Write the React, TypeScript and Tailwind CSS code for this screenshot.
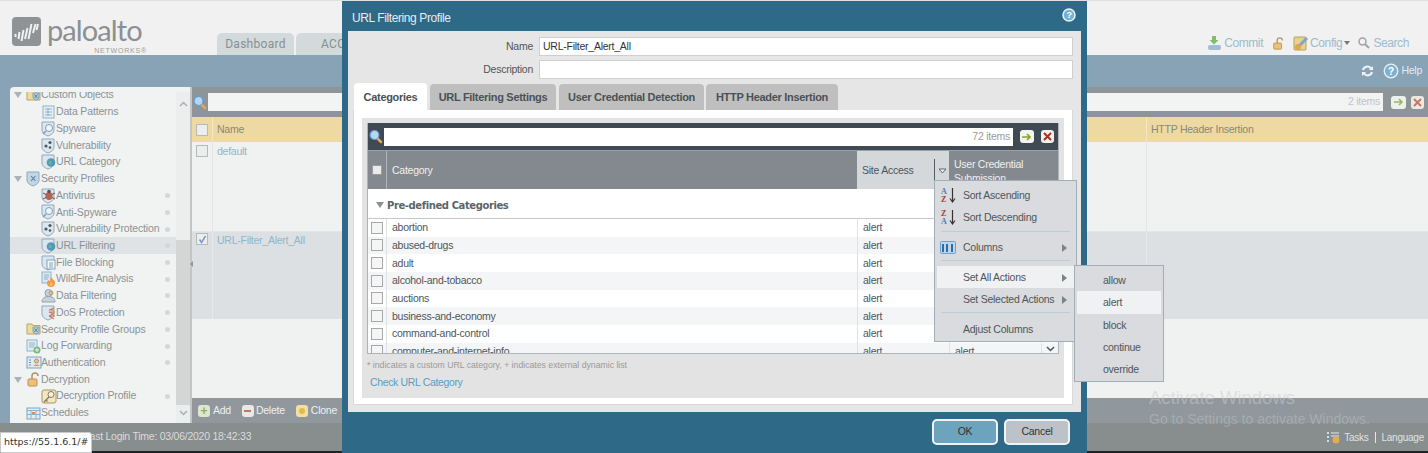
import React from "react";

const FONT = "font-['Liberation_Sans',Arial,sans-serif]";

function Shield({ fill = "#b9cfe0", children }: { fill?: string; children?: React.ReactNode }) {
  return (
    <svg width="15" height="16" viewBox="0 0 15 16" className="shrink-0">
      <path d="M1 1h12v8c0 3-3 5-6 6-3-1-6-3-6-6z" fill={fill} stroke="#8fa9bd" strokeWidth="1" />
      {children}
    </svg>
  );
}

function TreeIcon({ kind }: { kind: string }) {
  switch (kind) {
    case "table":
      return (
        <svg width="13" height="14" viewBox="0 0 13 14" className="shrink-0">
          <rect x="1" y="1" width="11" height="12" fill="#e6eff5" stroke="#8db3cc" />
          <path d="M3 4h7M3 7h7M3 10h7M6 3v8" stroke="#8db3cc" />
        </svg>
      );
    case "spy":
      return (
        <Shield fill="#dbe6ee">
          <circle cx="8" cy="7" r="3.5" fill="#eef4f8" stroke="#7f9fb5" />
          <path d="M5 10l-3 3" stroke="#7f9fb5" strokeWidth="1.6" />
        </Shield>
      );
    case "vuln":
      return (
        <Shield fill="#dbe6ee">
          <circle cx="9" cy="4.5" r="1.6" fill="#4e5a60" />
          <circle cx="5" cy="8" r="1.6" fill="#4e5a60" />
          <circle cx="9" cy="9.5" r="1.3" fill="#4e5a60" />
        </Shield>
      );
    case "url":
      return (
        <Shield fill="#dbe6ee">
          <circle cx="10" cy="8.5" r="4.3" fill="#4f98c4" />
          <path d="M8 6.5c2 0 3 1 2.6 2.6-.5 1.4-2 1.7-3 .6z" fill="#7fb069" />
        </Shield>
      );
    case "sec":
      return (
        <Shield fill="#c3d6e6">
          <path d="M5 5l4.5 5M9.5 5L5 10" stroke="#4f7ea4" strokeWidth="1.1" />
        </Shield>
      );
    case "bug":
      return (
        <Shield fill="#dbe6ee">
          <ellipse cx="8" cy="8" rx="3.6" ry="4" fill="#b9604e" />
          <path d="M2 5l3 1.500M2 11l3-1.500M14 5l-3 1.500M14 11l-3-1.500" stroke="#555" />
          <circle cx="8" cy="3.500" r="1.800" fill="#555" />
        </Shield>
      );
    case "file":
      return (
        <Shield fill="#dbe6ee">
          <rect x="6" y="5" width="8" height="9" fill="#f4f8fa" stroke="#7fa5bf" />
          <path d="M8 8h4M8 10h4M8 12h4" stroke="#7fa5bf" />
        </Shield>
      );
    case "fire":
      return (
        <svg width="15" height="16" viewBox="0 0 15 16" className="shrink-0">
          <rect x="1" y="1" width="9" height="11" fill="#dbe8f0" stroke="#8db3cc" />
          <path d="M3 4h5M3 6h5M3 8h4" stroke="#8db3cc" />
          <path d="M10 6c1 2 4 3 4 6a4 4 0 0 1-8 0c0-2 1-2 2-3 0 1 .5 1 1 1 .5-1 0-2 1-4z" fill="#ef9a4a" />
          <path d="M10 11c1 1 1.500 1.500 1.500 2.500a1.500 1.500 0 0 1-3 0c0-1 1-1.500 1.500-2.500z" fill="#e9c65c" />
        </svg>
      );
    case "person":
      return (
        <svg width="15" height="16" viewBox="0 0 15 16" className="shrink-0">
          <circle cx="7.500" cy="5" r="3.500" fill="#c7d2da" stroke="#90a2ae" />
          <path d="M1 14c0-4 3-5.500 6.500-5.500S14 10 14 14z" fill="#c7d2da" stroke="#90a2ae" />
          <circle cx="10" cy="5" r="2" fill="none" stroke="#c99a58" />
        </svg>
      );
    case "dos":
      return (
        <Shield fill="#dbe6ee">
          <path d="M13 3L8 5h5M14 7H8l5 2M14 11H8l4-2M13 14l-5-3" stroke="#d2785c" strokeWidth="1.100" fill="none" />
        </Shield>
      );
    case "group":
      return (
        <svg width="15" height="15" viewBox="0 0 15 15" className="shrink-0">
          <path d="M1 2h5l1 1.500h7V12H1z" fill="#efdc9d" stroke="#b8a468" />
          <path d="M7 5h6v4c0 1.500-1.500 2.500-3 3-1.500-.5-3-1.500-3-3z" fill="#b9cfe0" stroke="#7fa0b8" />
          <path d="M8.500 6.500l3 3.500M11.500 6.500l-3 3.500" stroke="#4f7ea4" />
        </svg>
      );
    case "log":
      return (
        <svg width="15" height="15" viewBox="0 0 15 15" className="shrink-0">
          <rect x="1" y="1" width="10" height="11" fill="#e2edf4" stroke="#8db3cc" />
          <path d="M3 4h6M3 6h6M3 8h5" stroke="#8db3cc" />
          <circle cx="11" cy="11" r="3.500" fill="#7eb97a" />
          <path d="M9 11h4M11 9v4" stroke="#eef" />
        </svg>
      );
    case "auth":
      return (
        <svg width="16" height="13" viewBox="0 0 16 13" className="shrink-0">
          <rect x="1" y="1" width="14" height="11" fill="#dfeaf2" stroke="#7fa5bf" />
          <path d="M3 4h2M3 6.500h2M3 9h2" stroke="#6d93ae" />
          <circle cx="10.500" cy="5" r="2" fill="#e3c9a0" stroke="#b78e5a" />
          <path d="M7.500 10c0-2 6-2 6 0z" fill="#cf9d62" />
        </svg>
      );
    case "lock":
      return (
        <svg width="15" height="15" viewBox="0 0 15 15" className="shrink-0">
          <path d="M6 7V4a3 3 0 0 1 6 0" fill="none" stroke="#b39564" strokeWidth="1.500" />
          <rect x="2" y="7" width="9" height="7" rx="1" fill="#eec078" stroke="#bd9052" />
        </svg>
      );
    case "key":
      return (
        <svg width="16" height="15" viewBox="0 0 16 15" className="shrink-0">
          <rect x="1" y="1" width="14" height="13" rx="2" fill="#f3e7c0" stroke="#a7975f" />
          <circle cx="10" cy="5.500" r="3" fill="#f6f2df" stroke="#84795a" />
          <path d="M8 8l-5 5M5 11l1.500 1.500" stroke="#84795a" strokeWidth="1.300" />
        </svg>
      );
    case "sched":
      return (
        <svg width="15" height="13" viewBox="0 0 15 13" className="shrink-0">
          <rect x="1" y="1" width="13" height="11" fill="#e2edf4" stroke="#7fa5bf" />
          <path d="M1 3.500h13M5 3.500V12M10 3.500V12M1 7.500h13" stroke="#8db3cc" />
          <rect x="6" y="5" width="3" height="2" fill="#d98c5d" />
        </svg>
      );
    default:
      return null;
  }
}

const tree: { label: string; icon: string; level: number; arrow?: boolean; dot?: boolean; active?: boolean }[] = [
  { label: "Custom Objects", icon: "group", level: 0, arrow: true },
  { label: "Data Patterns", icon: "table", level: 1 },
  { label: "Spyware", icon: "spy", level: 1 },
  { label: "Vulnerability", icon: "vuln", level: 1 },
  { label: "URL Category", icon: "url", level: 1 },
  { label: "Security Profiles", icon: "sec", level: 0, arrow: true },
  { label: "Antivirus", icon: "bug", level: 1, dot: true },
  { label: "Anti-Spyware", icon: "spy", level: 1, dot: true },
  { label: "Vulnerability Protection", icon: "vuln", level: 1, dot: true },
  { label: "URL Filtering", icon: "url", level: 1, dot: true, active: true },
  { label: "File Blocking", icon: "file", level: 1, dot: true },
  { label: "WildFire Analysis", icon: "fire", level: 1, dot: true },
  { label: "Data Filtering", icon: "person", level: 1, dot: true },
  { label: "DoS Protection", icon: "dos", level: 1, dot: true },
  { label: "Security Profile Groups", icon: "group", level: 0, dot: true },
  { label: "Log Forwarding", icon: "log", level: 0, dot: true },
  { label: "Authentication", icon: "auth", level: 0, dot: true },
  { label: "Decryption", icon: "lock", level: 0, arrow: true },
  { label: "Decryption Profile", icon: "key", level: 1, dot: true },
  { label: "Schedules", icon: "sched", level: 0 },
];

function TreeRow({ row }: { row: (typeof tree)[number] }) {
  return (
    <div className={`flex h-[16.72px] items-center ${row.active ? "bg-[#dfe3e6]" : ""}`}>
      <div className={`flex min-w-0 flex-1 items-center ${row.level === 1 ? "pl-[31px]" : "pl-[4px]"}`}>
        {row.level === 0 && (
          <span className="flex w-[12px] shrink-0 justify-start">
            {row.arrow && <span className="h-0 w-0 border-x-[4px] border-t-[6px] border-x-transparent border-t-[#a9b2b6]" />}
          </span>
        )}
        <span className="flex w-[15px] shrink-0 justify-center">
          <TreeIcon kind={row.icon} />
        </span>
        <span className="whitespace-nowrap text-[10.5px] tracking-[-0.15px] text-[#8a9296]">{row.label}</span>
      </div>
      <span className="mr-[6px] flex w-[6px] justify-center">
        {row.dot && <span className="h-[5px] w-[5px] rounded-full bg-[#d4d7d8]" />}
      </span>
    </div>
  );
}

function Sidebar() {
  return (
    <div className="flex w-[180px] flex-col rounded-tl-[4px] bg-[#f1f2f2] pt-[5px]">
      <div className="flex min-h-0 flex-1">
        <div className="min-w-0 flex-1 overflow-hidden">
          <div className="-mt-[5px] pb-2">
            {tree.map((r) => (
              <TreeRow key={r.label} row={r} />
            ))}
          </div>
        </div>
        <div className="flex w-[14px] flex-col items-center bg-[#eceeee]">
          <svg width="9" height="6" viewBox="0 0 9 6" className="mt-[9px]">
            <path d="M1 5l3.500-3.500L8 5" fill="none" stroke="#a9afb2" strokeWidth="1.500" />
          </svg>
          <div className="mt-[133px] h-[165px] w-[14px] bg-[#d4d6d6]" />
          <svg width="9" height="6" viewBox="0 0 9 6" className="mt-[5px]">
            <path d="M1 1l3.500 3.500L8 1" fill="none" stroke="#a9afb2" strokeWidth="1.500" />
          </svg>
        </div>
      </div>
    </div>
  );
}

function Check({ checked, dim }: { checked?: boolean; dim?: boolean }) {
  return (
    <span className={`flex h-[12px] w-[12px] items-center justify-center border ${dim ? "border-[#b5babd] bg-[#eceeee]" : "border-[#a6a8aa] bg-[#f5f5f5]"}`}>
      {checked && (
        <svg width="9" height="9" viewBox="0 0 9 9">
          <path d="M1.500 4.500l2 3L7.500 1" fill="none" stroke="#7e97c4" strokeWidth="1.500" />
        </svg>
      )}
    </span>
  );
}

function Magnifier() {
  return (
    <svg width="14" height="15" viewBox="0 0 14 15" className="shrink-0">
      <path d="M8 9l4 4" stroke="#e0a85a" strokeWidth="2.500" strokeLinecap="round" />
      <circle cx="5.500" cy="6" r="4.500" fill="#b6d6f2" stroke="#5d9bd2" strokeWidth="1.200" />
    </svg>
  );
}

function ArrowBtn({ dim }: { dim?: boolean }) {
  return (
    <span className={`flex h-[13px] items-center justify-center rounded-[3px] ${dim ? "w-[15px] bg-[#eef0ee]" : "w-[14px] bg-[#f3f5ee]"}`}>
      <svg width="10" height="8" viewBox="0 0 10 8">
        <path d="M0 4h8M5 1l3 3-3 3" fill="none" stroke={dim ? "#9fb55f" : "#8aa52c"} strokeWidth="1.600" />
      </svg>
    </span>
  );
}

function ClearBtn({ dim }: { dim?: boolean }) {
  return (
    <span className={`flex h-[13px] w-[13px] items-center justify-center rounded-[3px] ${dim ? "bg-[#ece8e4]" : "bg-[#f3f1ee]"}`}>
      <svg width="9" height="9" viewBox="0 0 9 9">
        <path d="M1 1l7 7M8 1L1 8" stroke={dim ? "#bf7a66" : "#a8321d"} strokeWidth="2" />
      </svg>
    </span>
  );
}

function MainPanel() {
  return (
    <div className="flex min-w-0 flex-1 flex-col bg-[#f0f1f1]">
      <div className="flex h-[30px] items-center gap-[1px] bg-[#8e9599] pl-[1px] pr-[4px]">
        <Magnifier />
        <div className="flex h-[18px] flex-1 items-center justify-end bg-[#f2f3f3] pr-[3px] text-[10.5px] text-[#c0c4c6]">2 items</div>
        <div className="ml-[7px] flex items-center gap-[5px]">
          <ArrowBtn dim />
          <ClearBtn dim />
        </div>
      </div>
      <div className="flex h-[25px] bg-[#eed9a2] text-[10.5px] text-[#8a8877]">
        <div className="flex w-[21px] items-center justify-center border-r border-[#f5e7c3]">
          <Check dim />
        </div>
        <div className="flex flex-1 items-center pl-[4px] pt-[1px]">Name</div>
        <div className="flex w-[282px] items-center border-l border-[#f5e7c3] pl-[4px] pt-[1px]">HTTP Header Insertion</div>
      </div>
      <div className="flex min-h-0 flex-1 flex-col">
        <div className="flex h-[90px] border-b border-[#e4e6e6] text-[10.5px] text-[#8fb6cb]">
          <div className="flex w-[21px] justify-center border-r border-[#e4e6e6] pt-[3px]">
            <Check dim />
          </div>
          <div className="flex-1 pl-[4px] pt-[2px]">default</div>
          <div className="w-[282px] border-l border-[#e4e6e6]" />
        </div>
        <div className="flex h-[87px] bg-[#dce0e3] text-[10.5px] text-[#8fb6cb]">
          <div className="flex w-[21px] justify-center border-r border-[#e6e9eb] pt-[1px]">
            <Check checked dim />
          </div>
          <div className="flex-1 pl-[4px] pt-[1px]">URL-Filter_Alert_All</div>
          <div className="w-[282px] border-l border-[#e6e9eb]" />
        </div>
      </div>
      <div className="flex h-[25px] items-center gap-[11px] bg-[#90989d] pl-[6px] text-[10.5px] text-[#eef0f0]">
        <span className="flex items-center gap-[3px]">
          <span className="flex h-[12px] w-[12px] items-center justify-center rounded-[3px] bg-[#dfe6cf] text-[12px] leading-none font-bold text-[#93ad5b]">+</span>
          Add
        </span>
        <span className="flex items-center gap-[2px]">
          <span className="flex h-[12px] w-[12px] items-center justify-center rounded-[3px] bg-[#e8e8e6]">
            <span className="h-[2px] w-[7px] bg-[#c0785f]" />
          </span>
          Delete
        </span>
        <span className="flex items-center gap-[3px]">
          <span className="flex h-[12px] w-[12px] items-center justify-center rounded-[3px] bg-[#f0e0a6]">
            <span className="h-[6px] w-[6px] rounded-full bg-[#e3b94e]" />
          </span>
          Clone
        </span>
        <span className="h-[12px] w-[10px] border border-[#b7c8d6] bg-[#e7edf2]" />
      </div>
    </div>
  );
}

function Logo() {
  return (
    <div className="flex w-[217px] shrink-0 items-start pl-[12px]">
      <svg width="29" height="29" viewBox="0 0 29 29" className="mt-[16px] shrink-0">
        <rect width="29" height="29" rx="4" fill="#8f9395" />
        <path d="M3.500 17v3M7.500 15l-1 7M11.500 13l-2 11M15.500 11l-2.500 11M19.500 7l-3 15M23.500 7l-2.500 9M26 7l-1.500 6" stroke="#f1f1f1" strokeWidth="2" />
      </svg>
      <div className="ml-[6px] flex w-[98px] flex-col items-end">
        <span className="mt-[12px] self-start font-['Lato',sans-serif] text-[29px] leading-[34px] tracking-[-0.9px] text-[#8c9092]">paloalto</span>
        <span className="mr-[-2px] text-[7px] leading-[8px] tracking-[0.8px] text-[#9a9ea0]">NETWORKS®</span>
      </div>
    </div>
  );
}

function Header() {
  return (
    <div className="flex h-[55px] shrink-0 items-end border-t border-[#dfe0e0] bg-[#f1f1f1]">
      <Logo />
      <div className="flex items-end gap-[2px]">
        <div className="flex h-[22px] w-[77px] items-center justify-center rounded-t-[5px] bg-[#d3dadc] font-['Roboto',sans-serif] text-[12px] tracking-[0.3px] text-[#868f92]">Dashboard</div>
        <div className="flex h-[22px] w-[60px] items-center rounded-t-[5px] bg-[#d3dadc] pl-[25px] font-['Roboto',sans-serif] text-[12px] tracking-[0.3px] text-[#868f92]">ACC</div>
      </div>
      <div className="ml-auto flex items-center pb-[3px] pr-[19px] text-[12px] tracking-[-0.4px] text-[#9cbbce]">
        <svg width="15" height="15" viewBox="0 0 15 15">
          <path d="M5 0h4v4h2.500L7 8.500 2.500 4H5z" fill="#86ba6c" />
          <rect x="1" y="9" width="13" height="5" rx="2" fill="#9dbfd6" />
        </svg>
        <span className="ml-[2px]">Commit</span>
        <svg width="13" height="13" viewBox="0 0 15 15" className="ml-[9px]">
          <path d="M6 7V4a3 3 0 0 1 6 0" fill="none" stroke="#b39564" strokeWidth="1.500" />
          <rect x="2" y="7" width="9" height="7" rx="1" fill="#eec078" stroke="#bd9052" />
        </svg>
        <svg width="16" height="15" viewBox="0 0 16 15" className="ml-[8px]">
          <rect x="1" y="1" width="12" height="13" rx="1" fill="#e9d28f" stroke="#b59f60" />
          <path d="M14 2L6 10" stroke="#7fa7c6" strokeWidth="3" />
          <circle cx="5" cy="11" r="3" fill="#dda94c" />
        </svg>
        <span className="ml-[1px]">Config</span>
        <span className="ml-[2px] h-0 w-0 border-x-[3.500px] border-t-[4px] border-x-transparent border-t-[#777]" />
        <svg width="12" height="12" viewBox="0 0 12 12" className="ml-[8px]">
          <circle cx="4.500" cy="4.500" r="3.500" fill="none" stroke="#9ea4a7" strokeWidth="1.500" />
          <path d="M7 7l4 4" stroke="#9ea4a7" strokeWidth="2" />
        </svg>
        <span className="ml-[3px]">Search</span>
      </div>
    </div>
  );
}

const rows = ["abortion", "abused-drugs", "adult", "alcohol-and-tobacco", "auctions", "business-and-economy", "command-and-control", "computer-and-internet-info"];

function SortIcon({ desc }: { desc?: boolean }) {
  return (
    <span className="flex w-[22px] items-center">
      <span className="flex flex-col font-['Liberation_Serif',serif] text-[8px] leading-[8px] font-bold">
        <span className={desc ? "text-[#a83a32]" : "text-[#4f7fb8]"}>{desc ? "Z" : "A"}</span>
        <span className={desc ? "text-[#4f7fb8]" : "text-[#a83a32]"}>{desc ? "A" : "Z"}</span>
      </span>
      <svg width="7" height="15" viewBox="0 0 7 15" className="ml-[2px]">
        <path d="M3.500 0v13M1 10.500L3.500 14 6 10.500" fill="none" stroke="#333" strokeWidth="1.200" />
      </svg>
    </span>
  );
}

function MenuArrow() {
  return <span className="ml-auto mr-[3px] h-0 w-0 border-y-[4px] border-l-[5px] border-y-transparent border-l-[#7d8285]" />;
}

function ColumnMenu() {
  const rowCls = "flex h-[22px] shrink-0 items-center pr-[6px] pt-[1px] text-[10.5px] text-[#4f565a]";
  return (
    <div className="absolute left-[934px] top-[180px] z-10 flex h-[162px] w-[143px] flex-col border border-[#a1aeb6] bg-[#d9dbde] pt-[3px]">
      <div className={`${rowCls} pl-[6px]`}><SortIcon /><span>Sort Ascending</span></div>
      <div className={`${rowCls} pl-[6px]`}><SortIcon desc /><span>Sort Descending</span></div>
      <div className="mx-[6px] mb-[4px] mt-[3px] h-px shrink-0 bg-[#b9ced9]" />
      <div className={`${rowCls} pl-[5px]`}>
        <svg width="16" height="13" viewBox="0 0 16 13" className="mr-[7px]">
          <rect x="0.500" y="0.500" width="15" height="12" rx="1" fill="#bcd6ee" stroke="#6f9fcb" />
          <path d="M3 3v8M7 3v8M12 3v8M3 5h1M7 5h1M12 5h1" stroke="#2e6ca8" strokeWidth="2" />
        </svg>
        Columns<MenuArrow />
      </div>
      <div className="mx-[6px] mb-[5px] mt-[2px] h-px shrink-0 bg-[#b9ced9]" />
      <div className={`${rowCls} ml-[2px] bg-[#eff1f2] pl-[26px]`}>Set All Actions<MenuArrow /></div>
      <div className={`${rowCls} pl-[28px]`}>Set Selected Actions<MenuArrow /></div>
      <div className="mx-[6px] mb-[5px] mt-[2px] h-px shrink-0 bg-[#b9ced9]" />
      <div className={`${rowCls} pl-[28px]`}>Adjust Columns</div>
    </div>
  );
}

function ActionMenu() {
  return (
    <div className="absolute left-[1074px] top-[265px] z-20 flex h-[117px] w-[90px] flex-col border border-[#a1aeb6] bg-[#d9dbde] px-[2px] pt-[3px] text-[10.5px] text-[#4f565a]">
      {["allow", "alert", "block", "continue", "override"].map((a) => (
        <div key={a} className={`flex h-[22.4px] items-center pl-[26px] pt-[1px] ${a === "alert" ? "bg-[#eff1f2]" : ""}`}>{a}</div>
      ))}
    </div>
  );
}

function Grid() {
  return (
    <div className="h-[231px] overflow-hidden border border-t-0 border-[#aeb4b8] bg-white">
      <div className="flex h-[27px] items-center gap-[1px] bg-[#3f4a55] pl-[1px] pr-[4px]">
        <Magnifier />
        <div className="flex h-[18px] flex-1 items-center justify-end bg-white pr-[3px] text-[10.5px] text-[#9a9a9a]">72 items</div>
        <div className="ml-[6px] flex items-center gap-[7px]">
          <ArrowBtn />
          <ClearBtn />
        </div>
      </div>
      <div className="flex h-[39px] border-t border-[#9aa0a5] bg-[#83898f] text-[10.5px] text-[#eff0f1]">
        <div className="flex w-[19px] items-center justify-center border-r border-[#b1b5b9]">
          <span className="h-[10px] w-[10px] border border-[#9b9b9b] bg-[#ebebeb]" />
        </div>
        <div className="flex flex-1 items-center pl-[5px] pt-[1px]">Category</div>
        <div className="flex w-[92px] items-center bg-[#d5d8db] pl-[5px] pt-[1px] text-[#4d5458]">
          Site Access
          <span className="ml-auto flex h-[24px] w-[15px] items-center justify-center border-l border-[#555b60]">
            <svg width="9" height="6" viewBox="0 0 9 6"><path d="M1 1h7L4.500 5z" fill="#eef0f0" stroke="#666" /></svg>
          </span>
        </div>
        <div className="w-[109px] pl-[5px] pt-[6px] leading-[14px]">User Credential<br />Submission</div>
      </div>
      <div className="flex h-[30px] items-center border-b border-[#c5c9cc] pl-[8px] pt-[3px] font-['DejaVu_Sans',sans-serif] text-[10px] font-bold tracking-[-0.4px] text-[#5c6468]">
        <span className="mr-[3px] h-0 w-0 border-x-[4px] border-t-[6px] border-x-transparent border-t-[#8b9195]" />
        Pre-defined Categories
      </div>
      {rows.map((r, i) => (
        <div key={r} className={`flex h-[17.67px] items-center text-[10.5px] text-[#4f565a] ${i % 2 ? "bg-[#f3f5f6]" : "bg-white"}`}>
          <div className="flex h-full w-[19px] items-center justify-center border-r border-[#dfe2e4]">
            <Check />
          </div>
          <div className="flex-1 pl-[5px] pt-[1px]">{r}</div>
          <div className="flex h-full w-[92px] items-center border-l border-[#dfe2e4] pl-[5px] pt-[1px]">alert</div>
          <div className="flex h-full w-[109px] items-center border-l border-[#dfe2e4] pl-[5px] pt-[1px]">
            alert
            <span className="ml-auto flex h-full w-[17px] items-start justify-center border-l border-[#dfe2e4] pt-[2px]">
              <svg width="9" height="6" viewBox="0 0 9 6"><path d="M1 1l3.500 3.500L8 1" fill="none" stroke="#555" strokeWidth="1.500" /></svg>
            </span>
          </div>
        </div>
      ))}
    </div>
  );
}

function Dialog() {
  return (
    <div className="absolute left-[342px] top-[1px] flex h-[452px] w-[745px] flex-col bg-[#2f6988]">
      <div className="flex h-[30px] shrink-0 items-center pl-[10px] pr-[11px] pt-[3px] text-[12px] tracking-[-0.4px] text-[#e4edf2]">
        URL Filtering Profile
        <svg width="14" height="14" viewBox="0 0 14 14" className="-mt-[5px] ml-auto">
          <circle cx="7" cy="7" r="6" fill="#6fb4d8" stroke="#e8f2f7" strokeWidth="1.500" />
          <text x="7" y="10" textAnchor="middle" fontSize="9" fontWeight="bold" fill="#fff">?</text>
        </svg>
      </div>
      <div className="mx-[6px] flex h-[381px] shrink-0 flex-col bg-[#e6e6e6] pl-[5px] pr-[8px] pt-[6px]">
        <div className="flex h-[19px] items-center">
          <span className="w-[186px] pr-[6px] text-right text-[10.5px] text-[#4f565a]">Name</span>
          <div className="flex h-[19px] w-[534px] items-center border border-[#cfcfcf] bg-white pl-[3px] text-[10.5px] text-[#333]">URL-Filter_Alert_All</div>
        </div>
        <div className="mt-[4px] flex h-[19px] items-center">
          <span className="w-[186px] pr-[6px] text-right text-[10.5px] text-[#4f565a]">Description</span>
          <div className="h-[19px] w-[534px] border border-[#cfcfcf] bg-white" />
        </div>
        <div className="mt-[4px] flex h-[27px] items-end pl-[1px] text-[11px] font-bold tracking-[-0.3px] text-[#4a5156]">
          <div className="flex h-[27px] w-[73px] items-center justify-center rounded-t-[4px] bg-white pt-[1px]">Categories</div>
          <div className="ml-[3px] flex h-[26px] w-[126px] items-center justify-center rounded-t-[4px] bg-[#bfbfbf]">URL Filtering Settings</div>
          <div className="ml-[3px] flex h-[26px] w-[145px] items-center justify-center rounded-t-[4px] bg-[#bfbfbf]">User Credential Detection</div>
          <div className="ml-[2px] flex h-[26px] w-[132px] items-center justify-center rounded-t-[4px] bg-[#bfbfbf]">HTTP Header Insertion</div>
        </div>
        <div className="flex h-[295px] flex-col border border-t-0 border-[#d9d9d9] bg-white px-[8px] pt-[8px]">
          <div className="flex h-[280px] flex-col bg-[#e3e3e3] px-[5px] pt-[5px]">
            <Grid />
            <div className="pt-[5px] text-[8.7px] leading-[12px] tracking-normal text-[#9a9a9a]">* indicates a custom URL category, + indicates external dynamic list</div>
            <div className="pl-[3px] pt-[4px] text-[10.5px] tracking-[-0.35px] text-[#5b9dc0]">Check URL Category</div>
          </div>
        </div>
      </div>
      <div className="flex flex-1 items-start justify-end gap-[6px] pr-[17px] pt-[7px] text-[10.5px] text-[#333]">
        <div className="flex h-[26px] w-[66px] items-center justify-center rounded-[5px] border-2 border-[#eef3f6] bg-[#6ca3bd]">OK</div>
        <div className="flex h-[26px] w-[66px] items-center justify-center rounded-[5px] border-2 border-[#eef3f6] bg-[#bdc1c8]">Cancel</div>
      </div>
    </div>
  );
}

export default function App() {
  return (
    <div className={`relative flex h-[453px] w-[1428px] flex-col overflow-hidden bg-[#88a3b6] tracking-[-0.25px] ${FONT}`}>
      <Header />
      <div className="flex h-[32px] shrink-0 items-center justify-end bg-[#88a3b6] pr-[6px] text-[10.5px] text-[#e4ebef]">
        <svg width="13" height="12" viewBox="0 0 13 12">
          <path d="M2 5a4.500 4.500 0 0 1 8-1.500M11 7a4.500 4.500 0 0 1-8 1.500" fill="none" stroke="#f2f5f7" strokeWidth="2" />
          <path d="M8 5h4V1zM5 7H1v4z" fill="#f2f5f7" />
        </svg>
        <svg width="16" height="16" viewBox="0 0 16 16" className="ml-[9px]">
          <circle cx="8" cy="8" r="6.800" fill="#7fb0d0" stroke="#e8f0f5" strokeWidth="1.300" />
          <text x="8" y="11.500" textAnchor="middle" fontSize="10" fontWeight="bold" fill="#fff">?</text>
        </svg>
        <span className="ml-[2px]">Help</span>
      </div>
      <div className="flex h-[336px] shrink-0">
        <div className="w-[10px] shrink-0" />
        <Sidebar />
        <div className="w-[2px] shrink-0 bg-[#c1c5c7]" />
        <MainPanel />
      </div>
      <div className="flex h-[28px] shrink-0 items-center bg-[#888d8e] pl-[84px] text-[10.5px] text-[#d8dcdd]">
        Last Login Time: 03/06/2020 18:42:33
        <div className="ml-auto flex items-center pr-[4px] text-[10px] text-[#dfe3e5]">
          <svg width="14" height="13" viewBox="0 0 14 13">
            <path d="M0 2h2M0 6h2M0 10h2" stroke="#c9dfef" strokeWidth="2" />
            <path d="M4 2h8M4 5h8" stroke="#e7eaec" />
            <circle cx="9" cy="9" r="3.500" fill="#dfae4d" />
          </svg>
          <span className="ml-[3px]">Tasks</span>
          <span className="mx-[6px] h-[11px] w-px bg-[#e4e7e8]" />
          <span>Language</span>
        </div>
      </div>
      <div className="h-[2px] shrink-0 bg-[#1d2326]" />
      <Dialog />
      <ColumnMenu />
      <ActionMenu />
      <span className="absolute left-[190px] top-[261px] h-0 w-0 border-y-[3px] border-r-[3px] border-y-transparent border-r-[#8f979b]" />
      <div className="absolute left-0 top-[432px] z-30 flex h-[21px] w-[92px] items-center rounded-tr-[3px] border border-[#c9c9c9] bg-white pl-[3px] font-['DejaVu_Sans',sans-serif] text-[9.5px] tracking-normal text-[#333]">https://55.1.6.1/#</div>
      <div className="pointer-events-none absolute left-[1149px] top-[386px] text-[18.5px] leading-[24px] tracking-normal text-[#c8cccd]/50">Activate Windows</div>
      <div className="pointer-events-none absolute left-[1149px] top-[410px] text-[14px] leading-[18px] tracking-normal text-[#c8cccd]/40">Go to Settings to activate Windows.</div>
    </div>
  );
}
